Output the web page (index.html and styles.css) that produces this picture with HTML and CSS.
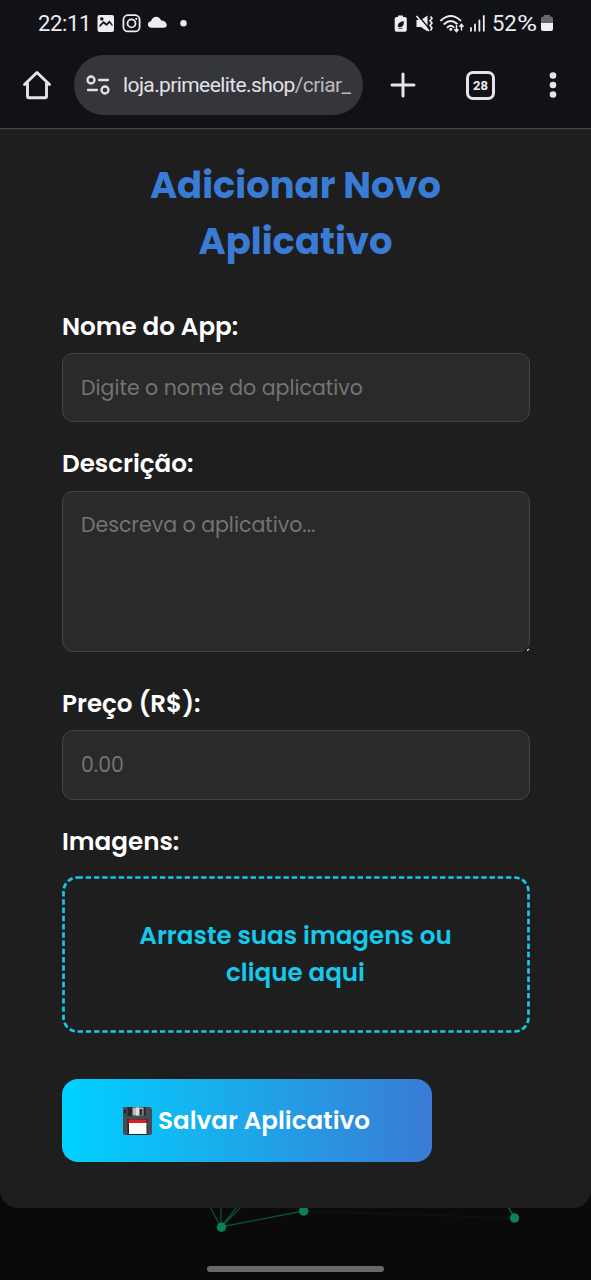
FILE: index.html
```html
<!DOCTYPE html>
<html lang="pt-BR">
<head>
<meta charset="utf-8">
<title>Adicionar Novo Aplicativo</title>
<link rel="stylesheet" href="styles.css">
</head>
<body>
<header class="chrome">
  <div class="status">
    <span class="clock">22:11</span>
    <svg class="status-left" width="94" height="22" viewBox="96 12 94 22" fill="#eeeef2">
      <path fill-rule="evenodd" d="M99.500 15h12.500q2 0 2 2v13q0 2-2 2H99.500q-2 0-2-2V17q0-2 2-2zM99.500 27.500l4-4 3 2.500 3-3 3 3.500v-2l-3-4-3 3-3-2.500-4 4zM101.800 17.200a1.700 1.700 0 1 0 .01 0z"/>
      <rect x="123.400" y="15.200" width="16.200" height="16.200" rx="4.500" fill="none" stroke="#eeeef2" stroke-width="1.800"/>
      <circle cx="131.500" cy="23.400" r="4" fill="none" stroke="#eeeef2" stroke-width="1.800"/>
      <circle cx="136.300" cy="18.800" r="1.100"/>
      <path d="M151.500 27.800c-4.300 0-5-5.800-.6-6.500 1.300-5.700 8.500-6.400 10.200-.8 6.400 .2 7.700 7.300 2.500 7.300z"/>
      <circle cx="183.500" cy="23.200" r="3.200"/>
    </svg>
    <svg class="status-right" width="94" height="22" viewBox="393 12 94 22" fill="#eeeef2">
      <path d="M398 17v-1.500h5V17h2q1.800 0 1.800 1.800V30q0 1.800-1.800 1.800h-8.500q-1.800 0-1.800-1.800V18.800q0-1.800 1.800-1.800z"/>
      <path d="M398 26.500q0-4.500 5.500-5 .3 5.700-4 5.500zM398.500 28.500q2 .5 4-.5" fill="#111217" stroke="#111217" stroke-width=".6"/>
      <path d="M416.500 20h4.500l6.500-4.500v16L421 27h-4.500z"/>
      <path d="M417.800 15l12 14.500" stroke="#111217" stroke-width="1.400"/>
      <path d="M416.500 16l12.500 15M430.500 16.500l1.500 2-2 2 2 2.500-2 2.500 2 2.500-1.500 2.500" fill="none" stroke="#eeeef2" stroke-width="1.600"/>
      <path d="M441 20.500q9.800-9 19.500 0M444.200 24q6.500-6 13 0M447.500 27.300q3.200-3 6.300 0" fill="none" stroke="#eeeef2" stroke-width="1.800" stroke-linecap="round"/>
      <circle cx="450.800" cy="29.300" r="1.500"/>
      <path d="M456.500 24v7.500m-2-2.300l2 2.300 2-2.300M461.500 31v-7m-2 2.300l2-2.300 2 2.300" fill="none" stroke="#111217" stroke-width="3.500"/>
      <path d="M456.500 24.500v7m-2-2.300l2 2.300 2-2.300M461.500 30.500v-6m-2 2.300l2-2.300 2 2.300" fill="none" stroke="#eeeef2" stroke-width="1.500"/>
      <path d="M471 28v2.800M475 24.500v6.300M479.400 20.500v10.300M483.800 16v14.800" stroke="#eeeef2" stroke-width="1.800" stroke-linecap="round"/>
    </svg>
    <span class="percent">52<span class="sign">%</span></span>
    <svg class="battery" width="12" height="18" viewBox="0 0 12 18"><path d="M3 2.500V1h6v1.500h1Q12 2.500 12 4.500V9H0V4.500q0-2 2-2z" fill="#68686d"/><path d="M0 9h12v6q0 2-2 2H2q-2 0-2-2z" fill="#f1f1f4"/></svg>
  </div>
  <nav class="toolbar">
    <svg class="home" width="30" height="32" viewBox="0 0 30 32" fill="none" stroke="#e5e4eb" stroke-width="2.900" stroke-linejoin="round" stroke-linecap="round"><path d="M2.500 15.500L15 3.500l12.500 12M5.500 13.500v14.300q0 1 1 1h17q1 0 1-1V13.500"/></svg>
    <div class="address">
      <svg class="tune" width="24" height="22" viewBox="0 0 24 22" fill="none" stroke="#e2e1e7" stroke-width="2.300" stroke-linecap="round"><circle cx="5" cy="6" r="3.500"/><path d="M13 6h9M2 16h9"/><circle cx="19" cy="16" r="3.500"/></svg>
      <span class="url">loja.primeelite.shop<span class="path">/criar_</span></span>
    </div>
    <svg class="plus" width="26" height="26" viewBox="0 0 26 26" stroke="#e5e4eb" stroke-width="3" stroke-linecap="round"><path d="M13 2v22M2 13h22"/></svg>
    <span class="tabs">28</span>
    <svg class="more" width="8" height="26" viewBox="0 0 8 26" fill="#e5e4eb"><circle cx="4" cy="3.500" r="3.300"/><circle cx="4" cy="13" r="3.300"/><circle cx="4" cy="22.500" r="3.300"/></svg>
  </nav>
</header>
<main class="page">
  <form class="card">
    <h1 class="title">Adicionar Novo<br>Aplicativo</h1>
    <label class="label label-name" for="name">Nome do App:</label>
    <input class="field input-name" id="name" placeholder="Digite o nome do aplicativo">
    <label class="label label-desc" for="desc">Descrição:</label>
    <div class="area-wrap">
      <textarea class="field area" id="desc" placeholder="Descreva o aplicativo..."></textarea>
      <svg class="grip" width="7" height="5" viewBox="0 0 7 5"><path d="M0 4L5 0v3z" fill="#171717"/><path d="M4 3.500L6 2" stroke="#ddd" stroke-width="1.500"/></svg>
    </div>
    <label class="label label-price" for="price">Preço (R$):</label>
    <input class="field input-price" id="price" placeholder="0.00">
    <span class="label label-images">Imagens:</span>
    <div class="drop">
      <svg class="dashes" width="468" height="157" viewBox="0 0 468 157"><rect x="1.500" y="1.500" width="465" height="154" rx="14" fill="none" stroke="#15c9ed" stroke-width="2.700" stroke-dasharray="5.400 2.840"/></svg>
      <span>Arraste suas imagens ou</span>
      <span>clique aqui</span>
    </div>
    <button class="save" type="button">
      <svg class="disk" width="29" height="28" viewBox="0 0 29 28"><path d="M1 0h26l2 2v24q0 2-2 2H2q-2 0-2-2V1q0-1 1-1z" fill="#484b50"/><path d="M4.500 0h18v9h-18z" fill="#24272b"/><path d="M9.500 .5h11v8h-11z" fill="#b9bbbf"/><path d="M13 .5h3v8h-3z" fill="#dedee0"/><path d="M16.500 2h3v6h-3z" fill="#30343a"/><path d="M4.500 12h20v16h-20z" fill="#252528"/><path d="M5.500 12.500h18v4h-18z" fill="#dc2029"/><path d="M6 16h17.500v11H6z" fill="#fff"/><path d="M2 3v3" stroke="#111" stroke-width="1.500"/></svg>
      <span class="save-text">Salvar Aplicativo</span>
    </button>
  </form>
  <div class="backdrop">
    <svg width="591" height="72" viewBox="0 1208 591 72"><g stroke="#087052" stroke-width="1.300"><path d="M210 1207l11 20 82-16M221 1227v-20M221 1227l20-20M221 1227l16-20" fill="none" opacity=".7"/><path d="M508 1207l7 11"/><path d="M304 1211l210 7" opacity=".1"/></g><g fill="#0b8060"><circle cx="221.500" cy="1227.300" r="4.700"/><circle cx="303.700" cy="1211" r="4.700"/><circle cx="514.500" cy="1218" r="4.700"/></g><rect x="207" y="1266" width="177" height="6" rx="3" fill="#68686a"/></svg>
  </div>
</main>
</body>
</html>
```
FILE: styles.css
```css
* { box-sizing: border-box; }
body { margin: 0; width: 591px; height: 1280px; overflow: hidden; background: #0a0a0a; font-family: Poppins, Inter, "Open Sans", sans-serif; }
svg { display: block; flex: none; }
.chrome { height: 130px; background: #111217; border-bottom: 1px solid #292929; box-shadow: inset 0 -1px #424242; color: #ededf1; font-family: Roboto, sans-serif; }
.status { height: 46px; padding-left: 38px; display: flex; align-items: center; }
.clock { width: 58px; font-size: 22px; letter-spacing: -.35px; white-space: nowrap; }
.status-right { margin-left: 203px; }
.percent { width: 48px; margin-left: 5px; font-size: 22px; white-space: nowrap; display: flex; align-items: baseline; }
.sign { display: inline-block; transform: scaleX(1.25); transform-origin: left; }
.battery { margin-left: 1px; }
.toolbar { height: 78px; display: flex; align-items: center; padding-left: 22px; }
.address { width: 289px; height: 60px; margin-left: 22px; border-radius: 30px; background: #35363b; display: flex; align-items: center; padding-left: 12px; }
.url { margin-left: 13px; font-size: 21px; letter-spacing: -.6px; white-space: nowrap; color: #e2e1e7; }
.path { color: #b9b9bf; }
.plus { margin-left: 27px; }
.tabs { width: 29px; height: 29px; margin-left: 50px; border: 3px solid #e5e4eb; border-radius: 7px; font-size: 13px; font-weight: 700; display: flex; align-items: center; justify-content: center; }
.more { margin-left: 54px; }
.card { height: 1078px; padding: 27px 61px 0 62px; background: #1e1e1e; border-radius: 0 0 18px 18px; display: flex; flex-direction: column; align-items: flex-start; }
.title { align-self: stretch; height: 112px; margin: 0 1px 0 0; text-align: center; color: #3a7bd5; font-size: 36.900px; line-height: 56px; font-weight: 700; white-space: nowrap; }
.label { height: 38px; line-height: 39px; font-size: 24.600px; font-weight: 600; color: #fff; white-space: nowrap; }
.field { display: block; width: 468px; height: 69px; margin: 0; padding: 0 18px; border: 1px solid #444; border-radius: 11px; background: #2a2a2a; font-family: inherit; font-size: 20.500px; resize: none; outline: none; }
.field::placeholder { color: #747474; opacity: 1; }
.label-name { margin-top: 38px; }
.input-name { margin-top: 8px; }
.label-desc { margin-top: 22px; }
.area-wrap { position: relative; margin-top: 9px; }
.area { height: 161px; padding-top: 17px; line-height: 32px; }
.grip { position: absolute; right: 0; bottom: 0; }
.label-price { margin-top: 32px; }
.input-price { height: 70px; margin-top: 8px; padding-bottom: 1px; }
.label-images { margin-top: 22px; }
.drop { position: relative; width: 468px; height: 157px; margin-top: 16px; padding: 41px 1px 0 0; display: flex; flex-direction: column; align-items: center; color: #15c9ed; font-size: 24.600px; font-weight: 600; line-height: 37px; white-space: nowrap; }
.dashes { position: absolute; inset: 0; }
.save { width: 370px; height: 83px; margin-top: 46px; padding: 0 0 0 61px; border: 0; border-radius: 16px; background: linear-gradient(90deg, #00d2ff, #3a7bd5); display: flex; align-items: center; color: #fff; font: 600 24.600px Poppins, Inter, sans-serif; white-space: nowrap; }
.save-text { margin-left: 6px; }
.backdrop { height: 72px; background: #0a0a0a; }
```
